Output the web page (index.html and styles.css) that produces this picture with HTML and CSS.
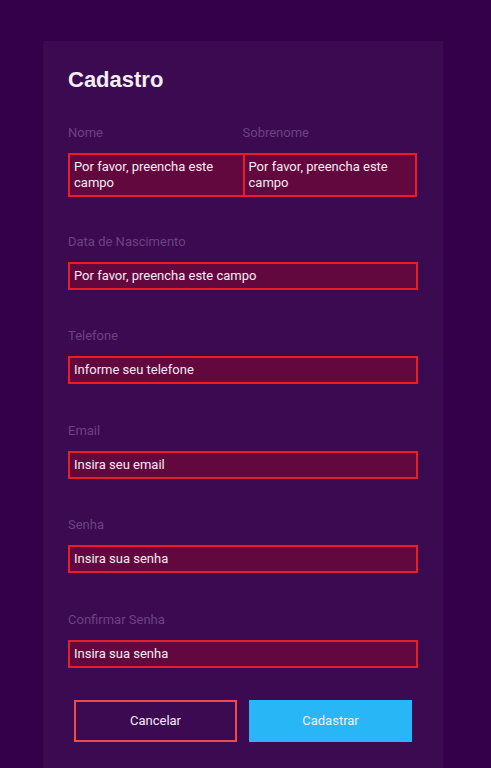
FILE: index.html
```html
<!DOCTYPE html>
<html lang="pt-BR">
<head>
<meta charset="utf-8">
<title>Cadastro</title>
<link rel="stylesheet" href="styles.css">
</head>
<body>
<main class="card">
  <h1 class="title">Cadastro</h1>
  <div class="field field-first">
    <div class="pair">
      <div class="col">
        <label class="label">Nome</label>
        <div class="input input-left">Por favor, preencha este campo</div>
      </div>
      <div class="col">
        <label class="label">Sobrenome</label>
        <div class="input">Por favor, preencha este campo</div>
      </div>
    </div>
  </div>
  <div class="field">
    <label class="label">Data de Nascimento</label>
    <div class="input">Por favor, preencha este campo</div>
  </div>
  <div class="field">
    <label class="label">Telefone</label>
    <div class="input">Informe seu telefone</div>
  </div>
  <div class="field">
    <label class="label">Email</label>
    <div class="input">Insira seu email</div>
  </div>
  <div class="field">
    <label class="label">Senha</label>
    <div class="input">Insira sua senha</div>
  </div>
  <div class="field field-last">
    <label class="label">Confirmar Senha</label>
    <div class="input">Insira sua senha</div>
  </div>
  <div class="actions">
    <button class="btn btn-cancel" type="button">Cancelar</button>
    <button class="btn btn-submit" type="button">Cadastrar</button>
  </div>
</main>
</body>
</html>
```
FILE: styles.css
```css
* { box-sizing: border-box; }
html, body {
  margin: 0;
  padding: 0;
  background: #35004a;
  font-family: Roboto, "Liberation Sans", sans-serif;
}
.card {
  width: 400px;
  margin: 41px 0 0 43px;
  padding: 26px 25px 30px;
  background: #3c0a50;
}
.title {
  margin: 0 0 33px;
  font-family: "Liberation Sans", Arial, sans-serif;
  font-weight: 700;
  font-size: 22px;
  line-height: 25px;
  color: #f4eef6;
}
.field {
  margin-bottom: 38.5px;
}
.field-first {
  margin-bottom: 36.6px;
}
.field-last {
  margin-bottom: 32px;
}
.pair {
  display: grid;
  grid-template-columns: 174.5px 174.5px;
}
.label {
  display: block;
  font-size: 13px;
  line-height: 16px;
  color: #6b4382;
  margin-bottom: 12px;
}
.input {
  border: 2px solid #ec1c24;
  background: #62083f;
  color: #f3ecf1;
  font-size: 13px;
  line-height: 16px;
  padding: 4px 6px 4px 4px;
}
.input-left {
  border-right: 0;
}
.actions {
  display: flex;
  gap: 12px;
  padding: 0 6px;
}
.btn {
  flex: 1 1 0;
  height: 42px;
  padding: 0;
  font-family: Roboto, "Liberation Sans", sans-serif;
  font-size: 13px;
  color: #f3eef6;
  cursor: pointer;
  border: 2px solid transparent;
}
.btn-cancel {
  background: transparent;
  border-color: #f04a4a;
}
.btn-submit {
  background: #29b6f6;
  border-color: #29b6f6;
}
```
